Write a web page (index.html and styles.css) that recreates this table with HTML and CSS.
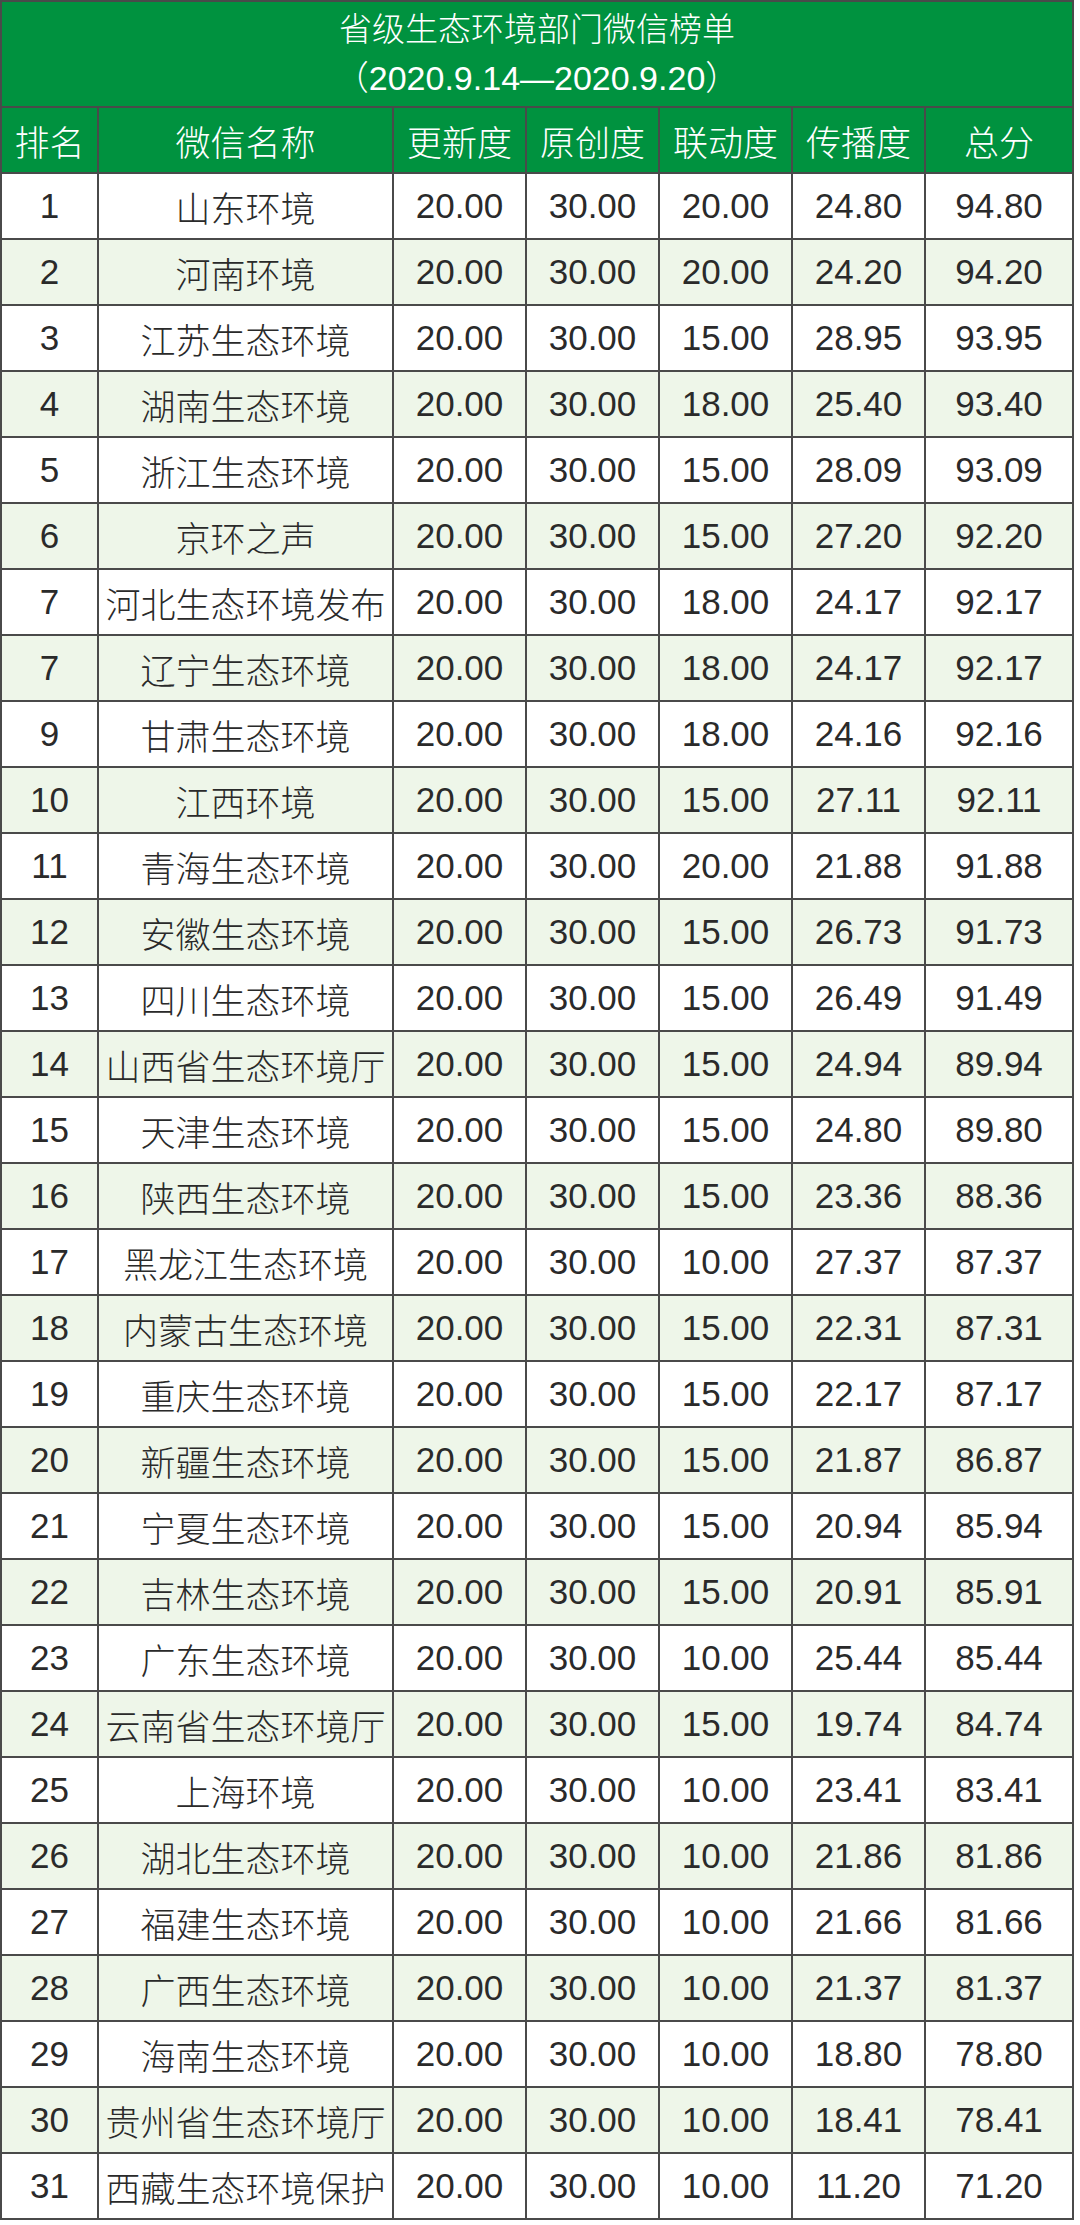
FILE: index.html
```html
<!DOCTYPE html>
<html lang="zh-CN">
<head>
<meta charset="utf-8">
<title>省级生态环境部门微信榜单</title>
<link rel="stylesheet" href="styles.css">
</head>
<body>
<table class="rank">
  <colgroup>
    <col class="c-rank"><col class="c-name"><col class="c-num"><col class="c-num"><col class="c-num"><col class="c-num"><col class="c-total">
  </colgroup>
  <thead>
    <tr class="title-row"><th colspan="7"><div class="title">省级生态环境部门微信榜单</div><div class="date">（2020.9.14—2020.9.20）</div></th></tr>
    <tr class="head-row"><th>排名</th><th>微信名称</th><th>更新度</th><th>原创度</th><th>联动度</th><th>传播度</th><th>总分</th></tr>
  </thead>
  <tbody>
    <tr><td>1</td><td>山东环境</td><td>20.00</td><td>30.00</td><td>20.00</td><td>24.80</td><td>94.80</td></tr>
    <tr><td>2</td><td>河南环境</td><td>20.00</td><td>30.00</td><td>20.00</td><td>24.20</td><td>94.20</td></tr>
    <tr><td>3</td><td>江苏生态环境</td><td>20.00</td><td>30.00</td><td>15.00</td><td>28.95</td><td>93.95</td></tr>
    <tr><td>4</td><td>湖南生态环境</td><td>20.00</td><td>30.00</td><td>18.00</td><td>25.40</td><td>93.40</td></tr>
    <tr><td>5</td><td>浙江生态环境</td><td>20.00</td><td>30.00</td><td>15.00</td><td>28.09</td><td>93.09</td></tr>
    <tr><td>6</td><td>京环之声</td><td>20.00</td><td>30.00</td><td>15.00</td><td>27.20</td><td>92.20</td></tr>
    <tr><td>7</td><td>河北生态环境发布</td><td>20.00</td><td>30.00</td><td>18.00</td><td>24.17</td><td>92.17</td></tr>
    <tr><td>7</td><td>辽宁生态环境</td><td>20.00</td><td>30.00</td><td>18.00</td><td>24.17</td><td>92.17</td></tr>
    <tr><td>9</td><td>甘肃生态环境</td><td>20.00</td><td>30.00</td><td>18.00</td><td>24.16</td><td>92.16</td></tr>
    <tr><td>10</td><td>江西环境</td><td>20.00</td><td>30.00</td><td>15.00</td><td>27.11</td><td>92.11</td></tr>
    <tr><td>11</td><td>青海生态环境</td><td>20.00</td><td>30.00</td><td>20.00</td><td>21.88</td><td>91.88</td></tr>
    <tr><td>12</td><td>安徽生态环境</td><td>20.00</td><td>30.00</td><td>15.00</td><td>26.73</td><td>91.73</td></tr>
    <tr><td>13</td><td>四川生态环境</td><td>20.00</td><td>30.00</td><td>15.00</td><td>26.49</td><td>91.49</td></tr>
    <tr><td>14</td><td>山西省生态环境厅</td><td>20.00</td><td>30.00</td><td>15.00</td><td>24.94</td><td>89.94</td></tr>
    <tr><td>15</td><td>天津生态环境</td><td>20.00</td><td>30.00</td><td>15.00</td><td>24.80</td><td>89.80</td></tr>
    <tr><td>16</td><td>陕西生态环境</td><td>20.00</td><td>30.00</td><td>15.00</td><td>23.36</td><td>88.36</td></tr>
    <tr><td>17</td><td>黑龙江生态环境</td><td>20.00</td><td>30.00</td><td>10.00</td><td>27.37</td><td>87.37</td></tr>
    <tr><td>18</td><td>内蒙古生态环境</td><td>20.00</td><td>30.00</td><td>15.00</td><td>22.31</td><td>87.31</td></tr>
    <tr><td>19</td><td>重庆生态环境</td><td>20.00</td><td>30.00</td><td>15.00</td><td>22.17</td><td>87.17</td></tr>
    <tr><td>20</td><td>新疆生态环境</td><td>20.00</td><td>30.00</td><td>15.00</td><td>21.87</td><td>86.87</td></tr>
    <tr><td>21</td><td>宁夏生态环境</td><td>20.00</td><td>30.00</td><td>15.00</td><td>20.94</td><td>85.94</td></tr>
    <tr><td>22</td><td>吉林生态环境</td><td>20.00</td><td>30.00</td><td>15.00</td><td>20.91</td><td>85.91</td></tr>
    <tr><td>23</td><td>广东生态环境</td><td>20.00</td><td>30.00</td><td>10.00</td><td>25.44</td><td>85.44</td></tr>
    <tr><td>24</td><td>云南省生态环境厅</td><td>20.00</td><td>30.00</td><td>15.00</td><td>19.74</td><td>84.74</td></tr>
    <tr><td>25</td><td>上海环境</td><td>20.00</td><td>30.00</td><td>10.00</td><td>23.41</td><td>83.41</td></tr>
    <tr><td>26</td><td>湖北生态环境</td><td>20.00</td><td>30.00</td><td>10.00</td><td>21.86</td><td>81.86</td></tr>
    <tr><td>27</td><td>福建生态环境</td><td>20.00</td><td>30.00</td><td>10.00</td><td>21.66</td><td>81.66</td></tr>
    <tr><td>28</td><td>广西生态环境</td><td>20.00</td><td>30.00</td><td>10.00</td><td>21.37</td><td>81.37</td></tr>
    <tr><td>29</td><td>海南生态环境</td><td>20.00</td><td>30.00</td><td>10.00</td><td>18.80</td><td>78.80</td></tr>
    <tr><td>30</td><td>贵州省生态环境厅</td><td>20.00</td><td>30.00</td><td>10.00</td><td>18.41</td><td>78.41</td></tr>
    <tr><td>31</td><td>西藏生态环境保护</td><td>20.00</td><td>30.00</td><td>10.00</td><td>11.20</td><td>71.20</td></tr>
  </tbody>
</table>
</body>
</html>
```
FILE: styles.css
```css
html, body {
  margin: 0;
  padding: 0;
  background: #ffffff;
}

body {
  font-family: "Liberation Sans", "Noto Sans CJK SC", sans-serif;
  font-weight: 300;
  color: #2a2a2a;
}

.rank {
  border-collapse: collapse;
  table-layout: fixed;
  width: 1074px;
  margin: 0;
}

.c-rank { width: 97px; }
.c-name { width: 295px; }
.c-num { width: 133px; }
.c-total { width: 148px; }

.rank th,
.rank td {
  border: 2px solid #4a4a4a;
  padding: 0;
  text-align: center;
  vertical-align: middle;
  white-space: nowrap;
}

.title-row th {
  height: 104px;
  background: #00923f;
  color: #ffffff;
  font-weight: 300;
}

.title {
  font-size: 33px;
  line-height: 48px;
}

.date {
  font-size: 34px;
  line-height: 48px;
}

.head-row th {
  height: 64px;
  background: #00923f;
  color: #ffffff;
  font-weight: 300;
  font-size: 35px;
}

.rank td {
  height: 64px;
  font-size: 35px;
  font-weight: 300;
  color: #2a2a2a;
  background: #ffffff;
}

.rank tbody tr:nth-child(even) td {
  background: #eef6e9;
}
```
